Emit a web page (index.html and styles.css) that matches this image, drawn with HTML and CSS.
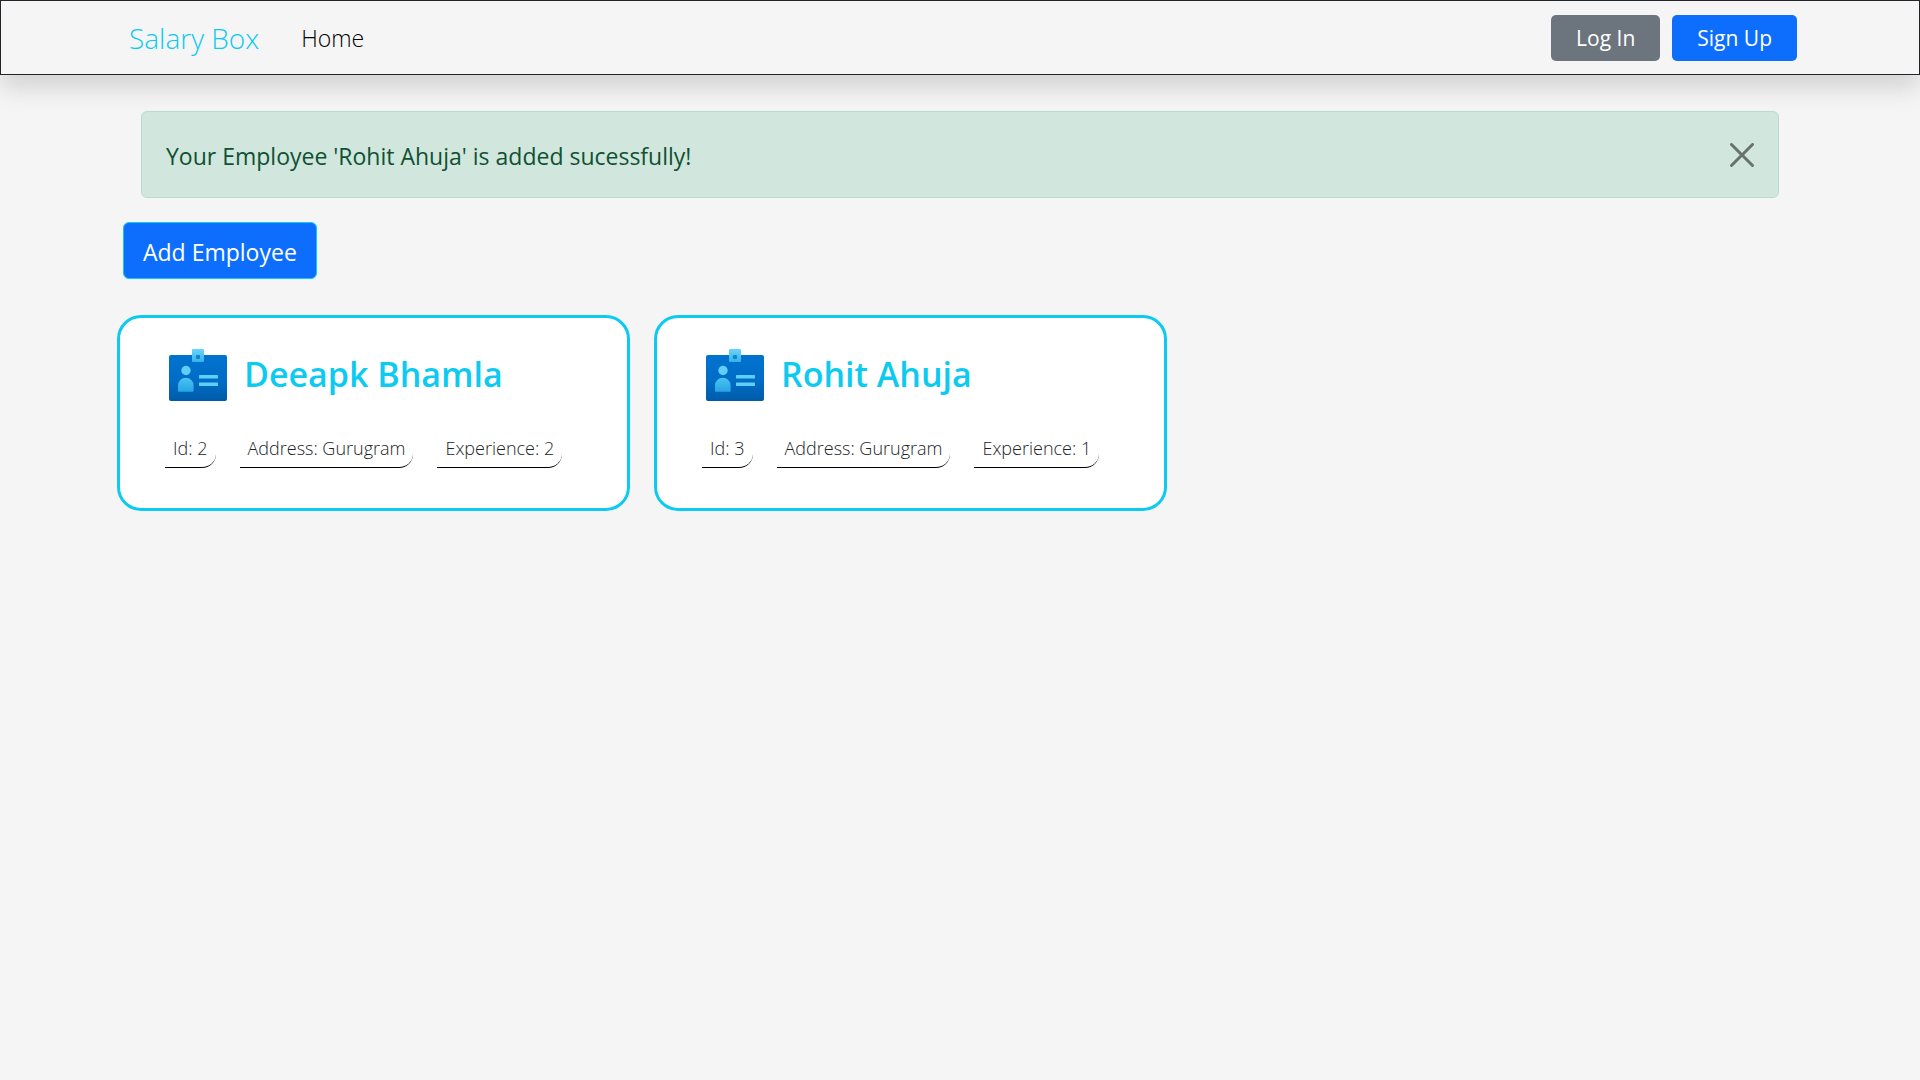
FILE: index.html
```html
<!DOCTYPE html>
<html lang="en">
<head>
<meta charset="utf-8">
<meta name="viewport" content="width=device-width, initial-scale=1">
<title>Salary Box</title>
<link rel="stylesheet" href="styles.css">
</head>
<body>
<svg class="defs" width="0" height="0" aria-hidden="true">
  <defs>
    <linearGradient id="badge-body" x1="0" y1="0" x2="0" y2="1">
      <stop offset="0" stop-color="#0073cf"/>
      <stop offset="0.55" stop-color="#006dc6"/>
      <stop offset="1" stop-color="#005ba8"/>
    </linearGradient>
    <linearGradient id="badge-clip" x1="0" y1="0" x2="0" y2="1">
      <stop offset="0" stop-color="#6ad4fc"/>
      <stop offset="1" stop-color="#35b2ea"/>
    </linearGradient>
    <linearGradient id="badge-person" x1="0" y1="0" x2="0" y2="1">
      <stop offset="0" stop-color="#4cc3f3"/>
      <stop offset="1" stop-color="#27a4e4"/>
    </linearGradient>
    <symbol id="badge" viewBox="0 0 58 52">
      <rect x="0" y="6" width="58" height="46" rx="2" fill="url(#badge-body)"/>
      <rect x="23" y="0" width="12" height="13" rx="1" fill="url(#badge-clip)"/>
      <rect x="27" y="6" width="4" height="4" rx="1" fill="#1583cc"/>
      <circle cx="17" cy="21.500" r="4.700" fill="#5fcefa"/>
      <path d="M9 42V36.500a7.800 7.800 0 0 1 15.600 0V42a.8.8 0 0 1-.8.8H9.800A.8.8 0 0 1 9 42z" fill="url(#badge-person)"/>
      <rect x="30" y="26" width="19" height="3.400" rx=".5" fill="#5fcefa"/>
      <rect x="30" y="33.500" width="19" height="3.400" rx=".5" fill="#5fcefa"/>
    </symbol>
  </defs>
</svg>

<header class="navbar">
  <nav class="nav-links">
    <a class="brand" href="#">Salary Box</a>
    <a class="nav-link" href="#">Home</a>
  </nav>
  <div class="nav-actions">
    <button class="btn btn-secondary" type="button">Log In</button>
    <button class="btn btn-primary" type="button">Sign Up</button>
  </div>
</header>

<main class="page">
  <div class="alert" role="alert">
    <p class="alert-text">Your Employee 'Rohit Ahuja' is added sucessfully!</p>
    <button class="alert-close" type="button" aria-label="Close">
      <svg width="24" height="24" viewBox="0 0 16 16"><path fill="#000" d="M.293.293a1 1 0 0 1 1.414 0L8 6.586 14.293.293a1 1 0 1 1 1.414 1.414L9.414 8l6.293 6.293a1 1 0 0 1-1.414 1.414L8 9.414l-6.293 6.293a1 1 0 0 1-1.414-1.414L6.586 8 .293 1.707a1 1 0 0 1 0-1.414z"/></svg>
    </button>
  </div>

  <button class="add-button" type="button">Add Employee</button>

  <section class="cards">
    <article class="card">
      <div class="card-head">
        <svg class="badge" width="58" height="52" aria-hidden="true"><use href="#badge"/></svg>
        <h2 class="card-title">Deeapk Bhamla</h2>
      </div>
      <ul class="facts">
        <li class="fact">Id: 2</li>
        <li class="fact">Address: Gurugram</li>
        <li class="fact">Experience: 2</li>
      </ul>
    </article>
    <article class="card">
      <div class="card-head">
        <svg class="badge" width="58" height="52" aria-hidden="true"><use href="#badge"/></svg>
        <h2 class="card-title">Rohit Ahuja</h2>
      </div>
      <ul class="facts">
        <li class="fact">Id: 3</li>
        <li class="fact">Address: Gurugram</li>
        <li class="fact">Experience: 1</li>
      </ul>
    </article>
  </section>
</main>
</body>
</html>
```
FILE: styles.css
```css
* {
  box-sizing: border-box;
}

body {
  margin: 0;
  background: #f5f5f5;
  color: #212529;
  font-family: "Segoe UI", "Open Sans", "Noto Sans", sans-serif;
  font-size: 24px;
  line-height: 36px;
}

.defs {
  display: block;
}

button {
  font-family: inherit;
  cursor: pointer;
}

.navbar {
  display: flex;
  align-items: center;
  justify-content: space-between;
  padding: 14px 122px 13px;
  border: 1px solid #212529;
  box-shadow: 0 12px 24px rgba(0, 0, 0, 0.15);
}

.nav-links {
  display: flex;
  align-items: center;
  gap: 42px;
  padding-left: 6px;
}

.nav-links a {
  font-weight: 300;
  text-decoration: none;
}

.brand {
  color: #0dcaf0;
  font-size: 28px;
}

.nav-link {
  color: #000;
  font-size: 23px;
}

.nav-actions {
  display: flex;
  gap: 12px;
}

.btn {
  height: 46px;
  padding: 0 25px;
  border: 0;
  border-radius: 5px;
  color: #fff;
  font-size: 21px;
}

.btn-secondary {
  background: #6c757d;
}

.btn-primary {
  background: #0d6efd;
}

.page {
  padding: 36px 117px;
}

.alert {
  display: flex;
  align-items: center;
  justify-content: space-between;
  margin: 0 24px 24px;
  padding: 24px;
  border: 1px solid #badbcc;
  border-radius: 6px;
  background: #d1e7dd;
  color: #0f5132;
}

.alert-text {
  margin: 0;
  padding-top: 3px;
  font-size: 23px;
  line-height: 34px;
}

.alert-close {
  display: flex;
  padding: 0;
  border: 0;
  background: none;
  opacity: 0.5;
}

.add-button {
  display: block;
  margin: 0 6px 36px;
  padding: 11px 19px 8px;
  border: 1px solid #0dcaf0;
  border-radius: 6px;
  background: #0d6efd;
  color: #fff;
  font-size: 23px;
  line-height: 36px;
}

.cards {
  display: grid;
  grid-template-columns: repeat(auto-fill, 513px);
  gap: 24px;
}

.card {
  padding: 31px 45px 40px;
  border: 3px solid #0dcaf0;
  border-radius: 24px;
  background: #fff;
}

.card-head {
  display: flex;
  align-items: flex-start;
  gap: 17px;
  padding-left: 4px;
}

.card-title {
  margin: 0;
  color: #0dcaf0;
  font-size: 34px;
  font-weight: 600;
  line-height: 50px;
}

.facts {
  display: flex;
  gap: 24px;
  margin: 27px 0 0;
  padding: 0;
  list-style: none;
}

.fact {
  padding: 2px 8px 1px;
  border-bottom: 1px solid #000;
  border-bottom-right-radius: 14px;
  font-size: 18px;
  font-weight: 300;
}
```
